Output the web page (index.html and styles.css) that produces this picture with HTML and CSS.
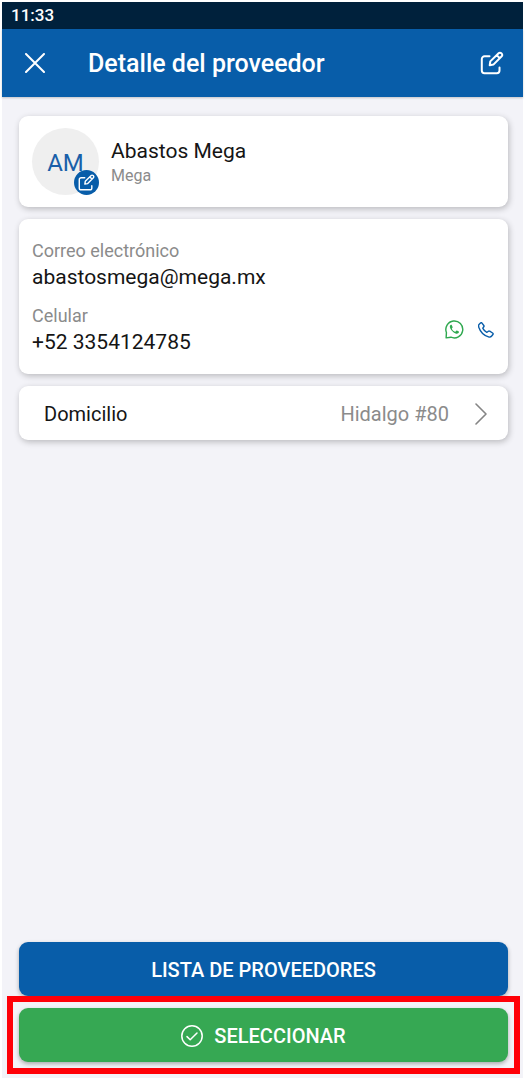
FILE: index.html
```html
<!DOCTYPE html>
<html lang="es">
<head>
<meta charset="utf-8">
<meta name="viewport" content="width=device-width, initial-scale=1">
<title>Detalle del proveedor</title>
<link rel="stylesheet" href="styles.css">
</head>
<body>
<svg class="symbols" aria-hidden="true">
  <symbol id="edit" viewBox="0 0 24 24">
    <path d="M9.500 5.300H4.500a2.700 2.700 0 0 0-2.700 2.700v11.600a2.700 2.700 0 0 0 2.700 2.700h12.300a2.700 2.700 0 0 0 2.700-2.700V16.500"/>
    <path d="M9.700 14.300l.6-3.900L18.600 2.200a1.900 1.900 0 0 1 2.700 0l.4.4a1.900 1.900 0 0 1 0 2.700L13.400 13.600z M16.700 4.100l3.100 3.100"/>
  </symbol>
</svg>
<div class="app">
  <div class="status-bar"><time>11:33</time></div>
  <header class="toolbar">
    <button class="icon-button" type="button" aria-label="Cerrar">
      <svg class="icon-close" viewBox="0 0 20 20"><path d="M1 1l18 18M19 1L1 19"/></svg>
    </button>
    <h1 class="title">Detalle del proveedor</h1>
    <button class="icon-button" type="button" aria-label="Editar">
      <svg class="icon-edit"><use href="#edit"/></svg>
    </button>
  </header>
  <main class="content">
    <section class="card profile">
      <div class="avatar">AM
        <button class="avatar-edit" type="button" aria-label="Editar foto">
          <svg class="icon-edit-small"><use href="#edit"/></svg>
        </button>
      </div>
      <div>
        <h2 class="name">Abastos Mega</h2>
        <p class="company">Mega</p>
      </div>
    </section>
    <section class="card contact">
      <dl class="fields">
        <div class="field">
          <dt class="label">Correo electrónico</dt>
          <dd class="value">abastosmega@mega.mx</dd>
        </div>
        <div class="field">
          <dt class="label">Celular</dt>
          <dd class="value">+52 3354124785</dd>
        </div>
      </dl>
      <div class="contact-actions">
        <button class="icon-button" type="button" aria-label="WhatsApp">
          <svg class="icon-whatsapp" viewBox="0 0 20 20">
            <path d="M1.200 18.800l.3-5.600A8.900 8.900 0 1 1 6.200 18.100z"/>
            <path class="solid" d="M7.200 5.400c-.3-.6-.6-.5-1-.4-1 .5-1.300 1.600-1 2.700.6 2.600 3.600 5.900 6.600 6.700 1.300.3 2.600-.3 2.900-1.400.1-.5.100-.8-.2-1l-1.900-.9c-.3-.1-.5 0-.7.200l-.7.9c-.2.200-.4.200-.7.100-1.300-.5-2.500-1.600-3.200-2.900-.1-.2 0-.4.100-.6l.6-.8c.1-.2.100-.4 0-.6z"/>
          </svg>
        </button>
        <button class="icon-button" type="button" aria-label="Llamar">
          <svg class="icon-phone" viewBox="0 0 16 16"><path d="M1 2.500L2.500 1c.5-.4 1.100-.4 1.500.1l1.800 2.400c.3.400.3.900 0 1.300l-.8 1c-.2.300-.2.600 0 .9.800 1.500 2 2.600 3.500 3.400.3.200.7.100.9-.1l1-.8c.4-.3.900-.3 1.300 0l2.900 1.800c.6.400.7 1 .3 1.500l-1.200 1.500c-.8 1-2 1.300-3.200.9C5.900 13.400 2.300 9.700.8 5.200.5 4.200.4 3.200 1 2.500z"/></svg>
        </button>
      </div>
    </section>
    <button class="card address" type="button">
      <span>Domicilio</span>
      <span class="address-value">Hidalgo #80</span>
      <svg class="icon-chevron" viewBox="0 0 12 22"><path d="M1 1l10 10L1 21"/></svg>
    </button>
  </main>
  <footer class="actions">
    <button class="action" type="button">LISTA DE PROVEEDORES</button>
    <div class="highlight">
      <button class="action action-select" type="button">
        <svg class="icon-check" viewBox="0 0 22 22"><circle cx="11" cy="11" r="10.200"/><path d="M6 11.600l3.200 3.200 6.800-6.800"/></svg>
        SELECCIONAR
      </button>
    </div>
  </footer>
</div>
</body>
</html>
```
FILE: styles.css
```css
* { box-sizing: border-box; }

body {
  margin: 0;
  padding: 2px;
  background: #fff;
  color: #151515;
  font-family: Roboto, "Liberation Sans", sans-serif;
  font-size: 20px;
}

h1, h2, p, dl, dd { margin: 0; }

button {
  padding: 0;
  border: 0;
  background: none;
  color: inherit;
  font: inherit;
}

svg {
  display: block;
  flex: none;
  fill: none;
  stroke: currentColor;
  stroke-width: 2;
  stroke-linecap: round;
  stroke-linejoin: round;
}

.symbols { position: absolute; width: 0; height: 0; }

.app {
  display: flex;
  flex-direction: column;
  min-height: calc(100vh - 4px);
  background: #f3f3f8;
}

.status-bar {
  padding: 0 9px;
  background: #00213c;
  color: #fff;
  font-size: 17px;
  font-weight: 500;
  line-height: 27px;
}

.toolbar {
  display: flex;
  align-items: center;
  height: 68px;
  padding: 0 19px 0 23px;
  background: #085da9;
  color: #fff;
  box-shadow: 0 1px 2px #0003;
}

.title {
  flex: 1;
  padding-top: 2px;
  padding-left: 43px;
  font-size: 25px;
  font-weight: 500;
  line-height: 28px;
}

.icon-close { width: 20px; height: 20px; }
.icon-edit { width: 24px; height: 24px; }

.content {
  display: flex;
  flex: 1;
  flex-direction: column;
  gap: 12px;
  padding: 19px 15px 24px 17px;
}

.card {
  display: flex;
  align-items: center;
  border-radius: 9px;
  background: #fff;
  box-shadow: 1px 2px 6px #0000003d;
}

.profile { gap: 12px; padding: 12px 13px; }

.avatar {
  position: relative;
  width: 67px;
  height: 67px;
  border-radius: 50%;
  background: #efefef;
  color: #1a5fa9;
  font-size: 24px;
  line-height: 70px;
  text-align: center;
}

.avatar-edit {
  position: absolute;
  right: 0;
  bottom: 0;
  display: grid;
  place-items: center;
  width: 25px;
  height: 25px;
  border-radius: 50%;
  background: #085da9;
  color: #fff;
}

.icon-edit-small { width: 17px; height: 17px; }

.name { padding-top: 2px; font-size: 21px; font-weight: 400; line-height: 26px; }
.company { color: #8b8b8b; font-size: 16px; line-height: 24px; }

.contact { justify-content: space-between; padding: 19px 14px 18px 13px; }

.fields { display: grid; gap: 12px; }
.label { color: #8b8b8b; font-size: 18px; line-height: 26px; }
.value { font-size: 21px; line-height: 27px; }

.contact-actions {
  display: flex;
  align-self: flex-end;
  align-items: center;
  gap: 14px;
  padding-bottom: 17px;
}

.icon-whatsapp { width: 19px; height: 19px; color: #2fa84f; stroke-width: 1.5; }
.icon-whatsapp .solid { fill: currentColor; stroke: none; }
.icon-phone { width: 16px; height: 16px; color: #085da9; stroke-width: 1.4; }

.address {
  height: 54px;
  padding: 2px 21px 0 25px;
}

.address-value { margin-left: auto; color: #8b8b8b; }
.icon-chevron { width: 12px; height: 22px; margin-left: 26px; color: #858585; stroke-width: 1.6; }

.actions {
  display: flex;
  flex-direction: column;
  gap: 12px;
  padding: 0 15px 16px 17px;
}

.action {
  display: flex;
  align-items: center;
  justify-content: center;
  gap: 11px;
  width: 100%;
  height: 54px;
  padding-top: 1px;
  border-radius: 9px;
  background: #085da9;
  box-shadow: 0 2px 4px #0000004d;
  color: #fff;
  font-weight: 500;
}

.action-select { background: #36a853; }

.highlight { position: relative; }

.highlight::after {
  position: absolute;
  inset: -12px;
  border: 6px solid #ff0008;
  content: "";
  pointer-events: none;
}

.icon-check { width: 22px; height: 22px; stroke-width: 1.5; }
```
